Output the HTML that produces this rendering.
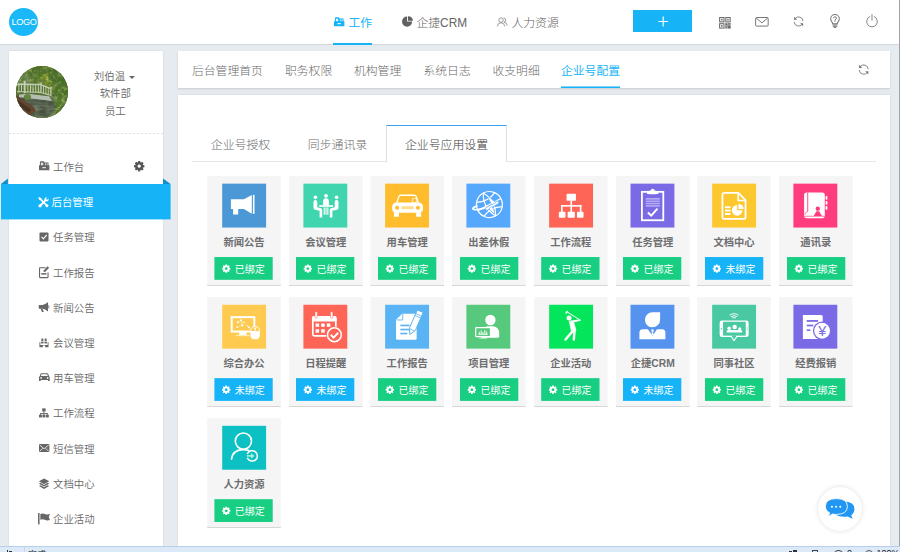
<!DOCTYPE html>
<html lang="zh-CN">
<head>
<meta charset="utf-8">
<title>企业号应用设置</title>
<style>
*{box-sizing:border-box;margin:0;padding:0}
html,body{width:900px;height:552px;overflow:hidden}
body{position:relative;background:#e6ebf0;font-family:"Liberation Sans","Noto Sans CJK SC",sans-serif;color:#666;font-size:10.4px;font-weight:350}
svg{display:block;overflow:visible}
#hd{position:absolute;left:0;top:0;width:899px;height:45px;background:#fff;border-bottom:1px solid #d3d8dd}
#rb{position:absolute;left:899px;top:0;width:1px;height:546px;background:#9fa3a7}
#logo{position:absolute;left:9px;top:8px;width:29px;height:28px;border-radius:50%;background:#1ab8f8;color:#fff;font-size:9.200px;line-height:28.500px;text-indent:2.600px;letter-spacing:-0.450px;overflow:hidden;white-space:nowrap}
.nav{position:absolute;top:0;height:45px;line-height:47px;font-size:11.850px;color:#646464;font-weight:300;white-space:nowrap}
.nav span{position:absolute;top:0}
.nav.on{color:#16b4f6;font-weight:400}
.nav.on:after{content:"";position:absolute;left:0;right:0;bottom:0;height:2px;background:#16b4f6}
.nav svg{position:absolute}
#plus{position:absolute;left:633px;top:10px;width:59px;height:22px;background:#16b4f6}
#plus{color:#fff;font-family:"Noto Sans CJK SC","Liberation Sans",sans-serif;font-weight:200;font-size:20.500px;line-height:21.400px;text-align:center;text-indent:0.800px}
.hi{position:absolute;color:#757575}
#sb{position:absolute;left:9px;top:51px;width:154px;height:495px;background:#fff;box-shadow:0 0 2px rgba(0,0,0,.10)}
#av{position:absolute;left:16px;top:65.500px;width:52px;height:52px;border-radius:50%;overflow:hidden;background:#5b6b2c}
.ut{position:absolute;left:67.300px;width:96px;text-align:center;font-size:10.400px;line-height:14px;color:#666;white-space:nowrap}
#dot{position:absolute;left:9px;top:133px;width:154px;height:1px;background:linear-gradient(90deg,#e0e0e0 50%,transparent 50%);background-size:4px 1px}
.mi{position:absolute;left:53px;font-size:10.400px;line-height:14px;color:#676767;white-space:nowrap}
.mc{position:absolute;color:#666}
#act{position:absolute;left:1px;top:184px;width:169px;height:35px;background:#16b4f6}
.fold{position:absolute;top:178px;width:0;height:0;border-style:solid}
#tb{position:absolute;left:178px;top:51px;width:712px;height:37px;background:#fff;box-shadow:0 0.500px 2px rgba(0,0,0,.13)}
.tab{position:absolute;top:51px;height:37px;line-height:40px;font-size:11.800px;color:#6a6a6a;font-weight:300;white-space:nowrap}
.tab.on{color:#16b4f6;font-weight:400}
.tab.on:after{content:"";position:absolute;left:0;right:0;bottom:0;height:2px;background:linear-gradient(to bottom,rgba(22,180,246,.55) 0,rgba(22,180,246,.55) 1px,#16b4f6 1px)}
#ct{position:absolute;left:178px;top:95px;width:712px;height:451px;background:#fff;box-shadow:0 0 2px rgba(0,0,0,.10)}
#tline{position:absolute;left:192px;top:161px;width:684px;height:1px;background:#e6e6e6}
.it{position:absolute;top:126px;height:35px;line-height:38.600px;font-size:11.900px;color:#6a6a6a;font-weight:300;text-align:center;white-space:nowrap}
.it.on{top:125px;height:37px;line-height:38.600px;background:#fff;border:1px solid #dfdfdf;border-top:1px solid #3d9ff0;border-bottom:0;color:#404040}
#cv{position:absolute;left:0;top:0}
.lb{position:absolute;width:93.600px;text-align:center;font-size:10.300px;line-height:14px;font-weight:bold;color:#6e6e6e;white-space:nowrap}
.bx{position:absolute;color:#fff;font-weight:400;font-size:10px;line-height:22.800px;white-space:nowrap}
#st{position:absolute;left:0;top:546px;width:900px;height:6px;background:#dce9f9;border-top:1px solid #b9cee9;overflow:hidden;font-size:9px;color:#1a1a1a}
#st span{position:absolute;top:0.400px;line-height:12px;white-space:nowrap}
#st i{position:absolute;top:2.600px;height:6px;background:#333;display:block}
#chat{position:absolute;left:818.400px;top:487.300px;width:44px;height:44px;border-radius:50%;background:#fff;box-shadow:0 0 5px rgba(0,0,0,.13)}
#chat svg{position:absolute;left:0;top:0}
</style>
</head>
<body>
<div id="hd"><div id="logo">LOGO</div>
<div class="nav on" style="left:333px;width:39px"><svg width="10.4" height="9.2" viewBox="0 0 10.400 9.200" style="left:0.700px;top:16.800px"><path d="M0 4.200 H10.400 V9.200 H0z M0.900 4.200 V1.300 Q0.900 0.200 2 0.200 H4.300 Q5 0.200 5.300 0.800 L5.600 1.400 H9.500 V4.200z" fill="currentColor"/><rect x="3.400" y="6.200" width="3.500" height="1" fill="#fff"/><rect x="1.900" y="1.700" width="2.300" height="2.500" fill="#fff" opacity="0.850"/><rect x="5.900" y="2.400" width="1.200" height="1.800" fill="#fff" opacity="0.700"/><rect x="7.700" y="2.400" width="1" height="1.800" fill="#fff" opacity="0.700"/></svg><span style="left:15.500px">工作</span></div>
<div class="nav" style="left:401px;width:66px"><svg width="11" height="11.2" viewBox="0 0 11.300 11" style="left:0.800px;top:16.400px;color:#606060"><path d="M5.200 0.300 A5.200 5.200 0 1 0 10.400 5.500 H5.200z" fill="currentColor"/><path d="M6 0 A5.200 5.200 0 0 1 11.200 4.700 H6z" fill="currentColor" transform="translate(0.100,0)"/></svg><span style="left:15.400px">企捷CRM</span></div>
<div class="nav" style="left:497px;width:63px"><svg width="10.6" height="10" viewBox="0 0 11 10" style="left:0.200px;top:16.600px;color:#808080"><g fill="none" stroke="currentColor" stroke-width="0.800"><circle cx="4.200" cy="3" r="2.300"/><path d="M0.400 9.600 Q0.600 5.800 4.200 5.800 Q7.800 5.800 8 9.600"/><path d="M6.800 0.800 Q9 1 9 3 Q9 5 7.200 5.200 Q10.400 5.400 10.600 8.800"/></g></svg><span style="left:14.400px">人力资源</span></div>
<div id="plus">+</div>
<div class="hi" style="left:719.1px;top:16.6px;color:#6a6a6a"><svg width="11.8" height="11.6" viewBox="0 0 12 12" ><g fill="none" stroke="currentColor" stroke-width="1.100"><rect x="0.550" y="0.550" width="4.500" height="4.500"/><rect x="6.950" y="0.550" width="4.500" height="4.500"/><rect x="0.550" y="6.950" width="4.500" height="4.500"/></g><g fill="currentColor"><rect x="2" y="2" width="1.600" height="1.600"/><rect x="8.400" y="2" width="1.600" height="1.600"/><rect x="2" y="8.400" width="1.600" height="1.600"/><rect x="6.400" y="6.400" width="2.400" height="2.600"/><rect x="9.200" y="6.400" width="2.800" height="1.600"/><rect x="6.400" y="9.400" width="1.600" height="2.600"/><rect x="8.600" y="8.600" width="3.400" height="3.400"/></g></svg></div>
<div class="hi" style="left:755px;top:17px"><svg width="13.8" height="9.6" viewBox="0 0 13.800 9.800" ><rect x="0.500" y="0.500" width="12.800" height="8.800" rx="1" fill="none" stroke="currentColor" stroke-width="1"/><path d="M1 1 L6.900 6 L12.800 1" fill="none" stroke="currentColor" stroke-width="1"/></svg></div>
<div class="hi" style="left:793.2px;top:15.6px"><svg width="11.2" height="11" viewBox="0 0 11.600 11.200" ><g transform="translate(11.600 0) scale(-1 1)"><g fill="none" stroke="currentColor" stroke-width="0.900"><path d="M1.200 5.200 A4.600 4.600 0 0 1 9.400 2.600"/><path d="M10.400 6 A4.600 4.600 0 0 1 2.200 8.600"/></g><path d="M10.500 0.700 V3.900 H7.300z" fill="currentColor"/><path d="M1.100 10.500 V7.300 H4.300z" fill="currentColor"/></g></svg></div>
<div class="hi" style="left:830.4px;top:13.8px"><svg width="10" height="14" viewBox="0 0 9.400 13.600" ><path d="M2.500 9.600 Q2.400 8.400 1.500 7.400 Q0.500 6.200 0.500 4.700 A4.200 4.200 0 0 1 8.900 4.700 Q8.900 6.200 7.900 7.400 Q7 8.400 6.900 9.600z" fill="none" stroke="currentColor" stroke-width="1"/><path d="M2.500 10.800 H6.900 M2.500 12 H6.900 M3.500 13.100 H5.900" stroke="currentColor" stroke-width="0.900"/><path d="M3.300 4 Q3.300 2.700 4.700 2.700 Q6.100 2.700 6.100 4 Q6.100 4.900 4.700 5.600 V7.400" fill="none" stroke="currentColor" stroke-width="0.900"/></svg></div>
<div class="hi" style="left:866.2px;top:13.9px;color:#858585"><svg width="12" height="12.4" viewBox="0 0 12 12.400" ><path d="M3.600 2.600 A5.400 5.400 0 1 0 8.400 2.600" fill="none" stroke="currentColor" stroke-width="1" stroke-linecap="round"/><path d="M6 0.500 V6.200" stroke="currentColor" stroke-width="1" stroke-linecap="round"/></svg></div>
</div><div id="rb"></div>
<div id="sb"></div>
<div id="av"><svg width="52" height="52" viewBox="0 0 52 52">
<defs><filter id="bl" x="-10%" y="-10%" width="120%" height="120%"><feGaussianBlur stdDeviation="1.1"/></filter>
<filter id="bl2" x="-10%" y="-10%" width="120%" height="120%"><feGaussianBlur stdDeviation="0.4"/></filter>
<filter id="bl3" x="-10%" y="-10%" width="120%" height="120%"><feGaussianBlur stdDeviation="0.6"/></filter>
<filter id="nz" x="0" y="0" width="100%" height="100%"><feTurbulence type="fractalNoise" baseFrequency="0.24" numOctaves="3" seed="7" result="n"/><feColorMatrix in="n" type="matrix" values="0 0 0 0 0.68  0 0 0 0 0.68  0 0 0 0 0.16  2.6 0 0 0 -1.2"/><feGaussianBlur stdDeviation="0.45"/></filter>
<filter id="nd" x="0" y="0" width="100%" height="100%"><feTurbulence type="fractalNoise" baseFrequency="0.3" numOctaves="2" seed="3" result="n"/><feColorMatrix in="n" type="matrix" values="0 0 0 0 0.10  0 0 0 0 0.18  0 0 0 0 0.05  0 2.8 0 0 -1.0"/><feGaussianBlur stdDeviation="0.45"/></filter>
<filter id="nw" x="0" y="0" width="100%" height="100%"><feTurbulence type="fractalNoise" baseFrequency="0.12 0.4" numOctaves="2" seed="11" result="n"/><feColorMatrix in="n" type="matrix" values="0 0 0 0 0.26  0 0 0 0 0.30  0 0 0 0 0.22  0 2.4 0 0 -0.95"/><feGaussianBlur stdDeviation="0.4"/></filter>
</defs>
<rect width="52" height="52" fill="#4b6c22"/>
<g filter="url(#bl)">
<ellipse cx="9" cy="13" rx="9" ry="7" fill="#6a8650"/>
<ellipse cx="22" cy="8" rx="10" ry="6" fill="#4a7020"/>
<ellipse cx="31" cy="14" rx="8" ry="6" fill="#7d9428"/>
<ellipse cx="41" cy="10" rx="9" ry="8" fill="#426a20"/>
<ellipse cx="36" cy="21" rx="7" ry="5" fill="#5d8026"/>
<ellipse cx="46" cy="25" rx="7" ry="12" fill="#456e22"/>
<ellipse cx="43" cy="38" rx="9" ry="8" fill="#50762a"/>
</g>
<rect width="52" height="52" filter="url(#nz)" opacity="0.650"/>
<rect width="52" height="52" filter="url(#nd)" opacity="0.850"/>
<g filter="url(#bl)">
<path d="M0 29 L8 28 L34 30.500 L37 35 L40 41 L36 48 L30 52 L0 52z" fill="#485240"/>
<path d="M16 35 L32 37 L35 44 L29 52 L19 52z" fill="#566250"/>
<path d="M22 40 L29 41 L30 50 L23 50z" fill="#464f3e"/>
</g>
<rect x="0" y="30" width="40" height="22" filter="url(#nw)" opacity="0.600"/>
<g filter="url(#bl3)">
<path d="M3 28.600 L12 27.800 L33 30.200 L36 35 L13 32.300 L3 31z" fill="#b4beb0"/>
<path d="M0 29 L18 41.500 L20 45 L12 50 L0 42z" fill="#62442e"/>
<path d="M0 33 L15 43.500 L13 46.500 L0 38.500z" fill="#463424"/>
<ellipse cx="11.500" cy="31" rx="3.600" ry="3" fill="#65833a"/>
</g>
<g filter="url(#bl2)" fill="#e9ece4" opacity="0.740">
<path d="M1 17.600 L24 17.800 L35 22 L35 23.300 L24 19.200 L1 19z"/>
<path d="M1 25 L24 25.800 L35 28.800 L35 30 L24 27 L1 26.200z" opacity="0.850"/>
<rect x="7.700" y="14.800" width="1.900" height="12.400"/>
<rect x="2.400" y="17.600" width="1" height="8.200"/><rect x="5" y="17.600" width="1" height="8.200"/>
<rect x="11.400" y="17.700" width="1" height="8.400"/><rect x="14" y="17.700" width="1" height="8.400"/><rect x="16.600" y="17.700" width="1" height="8.500"/><rect x="19.200" y="17.800" width="1" height="8.600"/><rect x="21.800" y="17.800" width="1" height="8.600"/>
<rect x="24.300" y="16.400" width="1.400" height="10.600"/>
<rect x="27" y="19.200" width="0.900" height="8.200"/><rect x="29.400" y="20" width="0.900" height="8.200"/><rect x="31.800" y="21" width="0.900" height="8.200"/>
<rect x="34.200" y="20.600" width="1.300" height="9.600"/>
</g>
</svg></div>
<div class="ut" style="top:70.200px;left:66.200px">刘伯温 <span style="display:inline-block;width:0;height:0;border:3.700px solid transparent;border-top:3.800px solid #666;border-bottom:0;vertical-align:1.200px;margin-left:0.600px"></span></div>
<div class="ut" style="top:87.200px">软件部</div>
<div class="ut" style="top:105.200px">员工</div>
<div id="dot"></div>
<svg style="position:absolute;left:0;top:170px" width="180" height="56" viewBox="0 170 180 56"><path d="M1 184 L7.900 178.600 V184z M163 178.600 L170.600 184 H163z" fill="#0f8ecd"/><rect x="1" y="184" width="169.600" height="35.400" fill="#16b4f6"/></svg>
<div class="mc" style="left:38.8px;top:160.8px"><svg width="10.4" height="9.2" viewBox="0 0 10.400 9.200" ><path d="M0 4.200 H10.400 V9.200 H0z M0.900 4.200 V1.300 Q0.900 0.200 2 0.200 H4.300 Q5 0.200 5.300 0.800 L5.600 1.400 H9.500 V4.200z" fill="currentColor"/><rect x="3.400" y="6.200" width="3.500" height="1" fill="#fff"/><rect x="1.900" y="1.700" width="2.300" height="2.500" fill="#fff" opacity="0.850"/><rect x="5.900" y="2.400" width="1.200" height="1.800" fill="#fff" opacity="0.700"/><rect x="7.700" y="2.400" width="1" height="1.800" fill="#fff" opacity="0.700"/></svg></div>
<div class="mi" style="top:161.00px">工作台</div>
<div class="mc" style="left:37.8px;top:196.6px;color:#fff"><svg width="11.2" height="10.6" viewBox="0 0 12 12" ><g transform="translate(12 0) scale(-1 1)"><g fill="none" stroke="currentColor" stroke-linecap="round"><path d="M2.600 2.600 L9.800 9.800" stroke-width="2.200"/><path d="M9.600 2.400 L2.400 9.600" stroke-width="1.900"/></g><circle cx="2.600" cy="2.600" r="2.400" fill="currentColor"/><path d="M0 0 L2.900 0.500 L2.900 2.900 L0.500 2.900z" fill="#16b4f6"/><path d="M8.200 1.300 L11.200 0 L12 0.800 L10.700 3.800z" fill="currentColor"/><circle cx="10" cy="10" r="1.900" fill="currentColor"/><circle cx="2.200" cy="9.800" r="1.700" fill="currentColor"/></g></svg></div>
<div class="mi" style="top:196.20px;color:#fff;left:51.600px;font-weight:400">后台管理</div>
<div class="mc" style="left:39.4px;top:231.6px"><svg width="10" height="10" viewBox="0 0 10.300 10.300" ><rect x="0.500" y="0.500" width="9.300" height="9.300" rx="1" fill="currentColor"/><path d="M2.600 5 L4.500 7 L8 3" fill="none" stroke="#fff" stroke-width="1.200"/></svg></div>
<div class="mi" style="top:231.40px">任务管理</div>
<div class="mc" style="left:38.9px;top:266px"><svg width="10.2" height="12.2" viewBox="0 0 10.200 12.200" ><path d="M6.600 1.700 H1.100 Q0.550 1.700 0.550 2.250 V11.100 Q0.550 11.650 1.100 11.650 H8.500 Q9.050 11.650 9.050 11.100 V6.400" fill="none" stroke="currentColor" stroke-width="1.100"/><path d="M8.600 0.200 L10.100 1.700 L6.400 5.700 L4.500 6.100 L4.900 4.200z" fill="currentColor"/><rect x="2.200" y="7.100" width="5.200" height="1.500" fill="currentColor"/></svg></div>
<div class="mi" style="top:266.60px">工作报告</div>
<div class="mc" style="left:38px;top:302.4px"><svg width="11.6" height="10.6" viewBox="0 0 11.600 11" ><path d="M0.500 4 Q0.500 3 1.500 3 H4.500 Q7.500 2.500 9.500 0.500 H10.200 V9.500 H9.500 Q7.500 7.500 4.500 7 H1.500 Q0.500 7 0.500 6z" fill="currentColor"/><path d="M2.500 7 H4.500 L5.800 10.500 H3.800z" fill="currentColor"/><path d="M10.700 3.500 Q11.800 5 10.700 6.500" stroke="currentColor" stroke-width="0.900" fill="none"/></svg></div>
<div class="mi" style="top:301.80px">新闻公告</div>
<div class="mc" style="left:39.2px;top:337.6px"><svg width="9.6" height="9.6" viewBox="0 0 11 11" ><g fill="currentColor"><rect x="2.700" y="0.500" width="2.300" height="3" rx="0.400"/><rect x="6.500" y="0.500" width="2.300" height="3" rx="0.400"/><rect x="2.200" y="4.200" width="3" height="2" /><rect x="6.200" y="4.200" width="3" height="2"/><path d="M0.500 5 h1 v3 h8.400 v-3 h1 v5.500 h-3.900 v-1.800 h-2.600 v1.800 h-3.900z"/></g></svg></div>
<div class="mi" style="top:337.00px">会议管理</div>
<div class="mc" style="left:38.9px;top:372.2px"><svg width="10.7" height="9.8" viewBox="0 0 11.400 10" ><path d="M2.600 1 H8.800 Q9.600 1 9.900 1.900 L10.700 4.200 Q11.400 4.500 11.400 5.400 V9.300 H9.600 V8.200 H1.800 V9.300 H0 V5.400 Q0 4.500 0.700 4.200 L1.500 1.900 Q1.800 1 2.600 1z M2.600 2.100 L2 4 H9.400 L8.800 2.100z" fill="currentColor" fill-rule="evenodd"/><circle cx="2.200" cy="6.100" r="0.900" fill="#fff"/><circle cx="9.200" cy="6.100" r="0.900" fill="#fff"/></svg></div>
<div class="mi" style="top:372.20px">用车管理</div>
<div class="mc" style="left:39.2px;top:407.9px"><svg width="9.8" height="9.8" viewBox="0 0 10.800 10" ><g fill="currentColor"><rect x="3.500" y="0" width="3.800" height="3.400"/><rect x="4.900" y="3" width="1" height="4.200"/><rect x="1.300" y="5.200" width="8.200" height="1"/><rect x="1.300" y="5.200" width="1" height="2"/><rect x="8.500" y="5.200" width="1" height="2"/><rect x="0" y="7" width="3.200" height="3"/><rect x="3.800" y="7" width="3.200" height="3"/><rect x="7.600" y="7" width="3.200" height="3"/></g></svg></div>
<div class="mi" style="top:407.40px">工作流程</div>
<div class="mc" style="left:39px;top:444.2px"><svg width="10.4" height="8" viewBox="0 0 10.500 8" ><rect x="0" y="0" width="10.500" height="8" rx="0.600" fill="currentColor"/><path d="M0.600 0.900 L5.250 4.800 L9.900 0.900 M0.600 7.400 L3.800 4.200 M9.900 7.400 L6.700 4.200" stroke="#fff" stroke-width="0.800" fill="none"/></svg></div>
<div class="mi" style="top:442.60px">短信管理</div>
<div class="mc" style="left:38.9px;top:477.8px"><svg width="10.2" height="11.4" viewBox="0 0 11 11.800" ><g fill="currentColor"><path d="M5.500 0.200 L11 3.300 L5.500 6.400 L0 3.300z"/><path d="M0 5.900 L1.600 5 L5.500 7.200 L9.400 5 L11 5.900 L5.500 9z"/><path d="M0 8.500 L1.600 7.600 L5.500 9.800 L9.400 7.600 L11 8.500 L5.500 11.600z"/></g></svg></div>
<div class="mi" style="top:477.80px">文档中心</div>
<div class="mc" style="left:38.2px;top:513.2px"><svg width="12" height="11.4" viewBox="0 0 12 11.500" ><rect x="0" y="0" width="1.500" height="11.500" fill="currentColor"/><path d="M2.300 0.900 Q4.700 0 6.800 1 Q9.300 2.100 12 1.100 L10.800 4 L12 7 Q9.300 8 6.800 6.900 Q4.700 5.900 2.300 6.800z" fill="currentColor"/></svg></div>
<div class="mi" style="top:513.00px">企业活动</div>
<div class="mc" style="left:133.8px;top:160.9px;color:#555"><svg width="10.4" height="10.4" viewBox="0 0 12 12" ><path fill="currentColor" fill-rule="evenodd" d="M4.900 0 h2.200 l0.300 1.500 l0.800 0.350 l1.300-0.900 l1.550 1.550 l-0.900 1.300 l0.350 0.800 l1.500 0.300 v2.200 l-1.500 0.300 l-0.350 0.800 l0.900 1.300 l-1.550 1.550 l-1.300-0.900 l-0.800 0.350 l-0.300 1.500 h-2.200 l-0.300-1.500 l-0.800-0.350 l-1.300 0.900 l-1.550-1.550 l0.900-1.300 l-0.350-0.800 l-1.500-0.300 v-2.200 l1.500-0.300 l0.350-0.800 l-0.900-1.300 l1.550-1.550 l1.300 0.900 l0.800-0.350z M6 4.100 a1.900 1.900 0 1 0 0.001 0z"/></svg></div>
<div id="tb"></div>
<div class="tab" style="left:192px">后台管理首页</div>
<div class="tab" style="left:285px">职务权限</div>
<div class="tab" style="left:354px">机构管理</div>
<div class="tab" style="left:423.5px">系统日志</div>
<div class="tab" style="left:492.5px">收支明细</div>
<div class="tab on" style="left:561px">企业号配置</div>
<div class="hi" style="left:858.4px;top:63.6px;color:#777"><svg width="11.4" height="11.2" viewBox="0 0 11.600 11.200" ><g transform="translate(11.600 0) scale(-1 1)"><g fill="none" stroke="currentColor" stroke-width="0.900"><path d="M1.200 5.200 A4.600 4.600 0 0 1 9.400 2.600"/><path d="M10.400 6 A4.600 4.600 0 0 1 2.200 8.600"/></g><path d="M10.500 0.700 V3.900 H7.300z" fill="currentColor"/><path d="M1.100 10.500 V7.300 H4.300z" fill="currentColor"/></g></svg></div>
<div id="ct"></div><div id="tline"></div>
<div class="it" style="left:192px;width:97px">企业号授权</div>
<div class="it" style="left:289px;width:97px">同步通讯录</div>
<div class="it on" style="left:386px;width:121px">企业号应用设置</div>
<svg id="cv" width="900" height="552" viewBox="0 0 900 552"><rect x="207.20" y="176.00" width="73.6" height="109.50" fill="#f5f5f6"/><rect x="207.20" y="285" width="73.6" height="1" fill="#d7d7d7"/><g transform="translate(222.20 183.65)"><rect width="43.900" height="43.900" fill="#4c97d5"/><path d="M8.700 15.500 H21.700 L29.600 11.400 V30 L21.700 25.300 H16 V30.800 H10.900 V25.300 H8.700z" fill="#fff"/>
<rect x="30.700" y="11.200" width="1.600" height="19" fill="#fff"/></g><rect x="214.40" y="257.05" width="58.300" height="22.750" fill="#17ce82"/><g transform="translate(222.10 264.50) scale(0.690)"><path fill="#fff" fill-rule="evenodd" d="M4.900 0 h2.200 l0.300 1.500 l0.800 0.350 l1.300-0.900 l1.550 1.550 l-0.900 1.300 l0.350 0.800 l1.500 0.300 v2.200 l-1.500 0.300 l-0.350 0.800 l0.900 1.300 l-1.550 1.550 l-1.300-0.900 l-0.800 0.350 l-0.300 1.500 h-2.200 l-0.300-1.500 l-0.800-0.350 l-1.300 0.900 l-1.550-1.550 l0.900-1.300 l-0.350-0.800 l-1.500-0.300 v-2.200 l1.500-0.300 l0.350-0.800 l-0.900-1.300 l1.550-1.550 l1.300 0.900 l0.800-0.350z M6 4 a2 2 0 1 0 0.001 0z"/></g><rect x="289.00" y="176.00" width="73.6" height="109.50" fill="#f5f5f6"/><rect x="289.00" y="285" width="73.6" height="1" fill="#d7d7d7"/><g transform="translate(303.40 183.65)"><rect width="43.900" height="43.900" fill="#40d5ae"/><g fill="#fff">
<circle cx="12" cy="13.700" r="1.800"/><circle cx="22.600" cy="12.200" r="1.900"/><circle cx="33.200" cy="13.700" r="1.800"/>
<path d="M19.700 21.800 v-4.400 a2.900 2.900 0 0 1 5.800 0 V21.800z"/>
<rect x="15.800" y="21.500" width="13.800" height="1.700"/>
<rect x="20.300" y="23.800" width="1.100" height="7.300"/><rect x="22.100" y="23.800" width="1.100" height="7.300"/><rect x="23.900" y="23.800" width="1.100" height="7.300"/>
<path d="M10.100 18.300 a1.900 1.900 0 0 1 3.800 0 v5.400 l3.600 0.900 q1.300 0.400 1.300 1.700 v7.500 h-2.600 v-6.600 l-4.600-1 q-1.500-0.400 -1.500-2z"/>
<path d="M35.100 18.300 a1.900 1.900 0 0 0 -3.800 0 v5.400 l-3.600 0.900 q-1.300 0.400 -1.300 1.700 v7.500 h2.600 v-6.600 l4.600-1 q1.500-0.400 1.500-2z"/>
</g></g><rect x="296.00" y="257.05" width="58.300" height="22.750" fill="#17ce82"/><g transform="translate(303.70 264.50) scale(0.690)"><path fill="#fff" fill-rule="evenodd" d="M4.900 0 h2.200 l0.300 1.500 l0.800 0.350 l1.300-0.900 l1.550 1.550 l-0.900 1.300 l0.350 0.800 l1.500 0.300 v2.200 l-1.500 0.300 l-0.350 0.800 l0.900 1.300 l-1.550 1.550 l-1.300-0.900 l-0.800 0.350 l-0.300 1.500 h-2.200 l-0.300-1.500 l-0.800-0.350 l-1.300 0.900 l-1.550-1.550 l0.900-1.300 l-0.350-0.800 l-1.500-0.300 v-2.200 l1.500-0.300 l0.350-0.800 l-0.900-1.300 l1.550-1.550 l1.300 0.900 l0.800-0.350z M6 4 a2 2 0 1 0 0.001 0z"/></g><rect x="370.40" y="176.00" width="73.6" height="109.50" fill="#f5f5f6"/><rect x="370.40" y="285" width="73.6" height="1" fill="#d7d7d7"/><g transform="translate(385.15 183.65)"><rect width="43.900" height="43.900" fill="#ffbc2c"/><path d="M11.6 19.2 L13.6 13.2 Q14.2 11.6 16 11.6 H28.8 Q30.6 11.6 31.2 13.2 L33.2 19.2" fill="none" stroke="#fff" stroke-width="1.3"/>
<circle cx="29.3" cy="16.8" r="2.3" fill="none" stroke="#fff" stroke-width="0.8"/>
<path d="M10.5 18.8 H34.3 Q37.9 19.6 37.9 24 Q37.9 28.2 34.5 29.2 H10.3 Q6.9 28.2 6.9 24 Q6.9 19.6 10.5 18.8z" fill="#fff"/>
<rect x="8.8" y="28.5" width="5" height="4.7" rx="0.6" fill="#fff"/><rect x="31" y="28.5" width="5" height="4.7" rx="0.6" fill="#fff"/>
<circle cx="12" cy="24" r="2" fill="#ffbc2c"/><circle cx="32.8" cy="24" r="2" fill="#ffbc2c"/>
<rect x="16.4" y="22.6" width="12" height="2.9" fill="#ffdb8a"/></g><rect x="378.00" y="257.05" width="58.300" height="22.750" fill="#17ce82"/><g transform="translate(385.70 264.50) scale(0.690)"><path fill="#fff" fill-rule="evenodd" d="M4.900 0 h2.200 l0.300 1.500 l0.800 0.350 l1.300-0.900 l1.550 1.550 l-0.900 1.300 l0.350 0.800 l1.500 0.300 v2.200 l-1.500 0.300 l-0.350 0.800 l0.900 1.300 l-1.550 1.550 l-1.300-0.900 l-0.800 0.350 l-0.300 1.500 h-2.200 l-0.300-1.500 l-0.800-0.350 l-1.300 0.900 l-1.550-1.550 l0.900-1.300 l-0.350-0.800 l-1.500-0.300 v-2.200 l1.500-0.300 l0.350-0.800 l-0.900-1.300 l1.550-1.550 l1.300 0.900 l0.800-0.350z M6 4 a2 2 0 1 0 0.001 0z"/></g><rect x="452.00" y="176.00" width="73.6" height="109.50" fill="#f5f5f6"/><rect x="452.00" y="285" width="73.6" height="1" fill="#d7d7d7"/><g transform="translate(466.40 183.65)"><rect width="43.900" height="43.900" fill="#56a8fc"/><g fill="none" stroke="#fff" stroke-width="1.200" transform="rotate(-28 23 20.900)">
<circle cx="23" cy="20.900" r="13"/>
<path d="M23 7.900 Q15.500 20.900 23 33.900"/>
<path d="M23 7.900 Q30.500 20.900 23 33.900"/>
<path d="M12.600 13 Q23 18 33.400 13"/>
<path d="M12.600 28.800 Q23 23.800 33.400 28.800"/>
<path d="M10 20.900 H36"/>
</g>
<path d="M20.500 23.600 Q8 27.500 6.600 25.300 Q6.200 23.600 10.500 22.400" fill="none" stroke="#fff" stroke-width="1.900" stroke-linecap="round"/>
<path d="M18.800 24.600 L29.800 17.800 Q31.800 16.800 32.500 18 Q32.800 19.300 31 20.500 L20.200 27z" fill="#fff" stroke="#56a8fc" stroke-width="0.700"/>
<path d="M25.600 21.200 L21.600 14.600 L23.600 13.800 L29.200 19.200z" fill="#fff" stroke="#56a8fc" stroke-width="0.500"/>
<path d="M25.600 22.800 L28.600 28.800 L26.800 29.600 L22.600 24.800z" fill="#fff" stroke="#56a8fc" stroke-width="0.500"/></g><rect x="460.00" y="257.05" width="58.300" height="22.750" fill="#17ce82"/><g transform="translate(467.70 264.50) scale(0.690)"><path fill="#fff" fill-rule="evenodd" d="M4.900 0 h2.200 l0.300 1.500 l0.800 0.350 l1.300-0.900 l1.550 1.550 l-0.900 1.300 l0.350 0.800 l1.500 0.300 v2.200 l-1.500 0.300 l-0.350 0.800 l0.900 1.300 l-1.550 1.550 l-1.300-0.900 l-0.800 0.350 l-0.300 1.500 h-2.200 l-0.300-1.500 l-0.800-0.350 l-1.300 0.900 l-1.550-1.550 l0.900-1.300 l-0.350-0.800 l-1.500-0.300 v-2.200 l1.500-0.300 l0.350-0.800 l-0.900-1.300 l1.550-1.550 l1.300 0.900 l0.800-0.350z M6 4 a2 2 0 1 0 0.001 0z"/></g><rect x="534.00" y="176.00" width="73.6" height="109.50" fill="#f5f5f6"/><rect x="534.00" y="285" width="73.6" height="1" fill="#d7d7d7"/><g transform="translate(549.15 183.65)"><rect width="43.900" height="43.900" fill="#ff6557"/><g fill="#fff">
<rect x="17.400" y="10.200" width="9.400" height="7" rx="0.900"/>
<rect x="21.300" y="17" width="1.600" height="11.600"/>
<rect x="11.900" y="21.400" width="20.400" height="1.600"/>
<rect x="11.900" y="21.400" width="1.600" height="7.200"/><rect x="30.700" y="21.400" width="1.600" height="7.200"/>
<rect x="9.700" y="28.200" width="6.600" height="6" rx="0.800"/><rect x="18.500" y="28.200" width="7.200" height="6" rx="0.800"/><rect x="27.800" y="28.200" width="6.600" height="6" rx="0.800"/>
</g></g><rect x="541.20" y="257.05" width="58.300" height="22.750" fill="#17ce82"/><g transform="translate(548.90 264.50) scale(0.690)"><path fill="#fff" fill-rule="evenodd" d="M4.900 0 h2.200 l0.300 1.500 l0.800 0.350 l1.300-0.900 l1.550 1.550 l-0.900 1.300 l0.350 0.800 l1.500 0.300 v2.200 l-1.500 0.300 l-0.350 0.800 l0.900 1.300 l-1.550 1.550 l-1.300-0.900 l-0.800 0.350 l-0.300 1.500 h-2.200 l-0.300-1.500 l-0.800-0.350 l-1.300 0.900 l-1.550-1.550 l0.900-1.300 l-0.350-0.800 l-1.500-0.300 v-2.200 l1.500-0.300 l0.350-0.800 l-0.900-1.300 l1.550-1.550 l1.300 0.900 l0.800-0.350z M6 4 a2 2 0 1 0 0.001 0z"/></g><rect x="616.00" y="176.00" width="73.6" height="109.50" fill="#f5f5f6"/><rect x="616.00" y="285" width="73.6" height="1" fill="#d7d7d7"/><g transform="translate(630.50 183.65)"><rect width="43.900" height="43.900" fill="#7b6ae6"/><rect x="11.400" y="8.200" width="21.400" height="28.400" fill="none" stroke="#fff" stroke-width="1.800"/>
<path d="M16.400 10 Q16.400 7.200 19 7 L20.200 6.900 Q20.600 5 22.200 5 Q23.800 5 24.200 6.900 L25.400 7 Q28 7.200 28 10 Q22.200 11.200 16.400 10z" fill="#fff"/>
<g fill="#b9b0f3"><rect x="15.300" y="14.400" width="14" height="1.600"/><rect x="15.300" y="16.900" width="14" height="1.400"/><rect x="15.300" y="19.200" width="14" height="1.400"/><rect x="15.300" y="21.500" width="14" height="1.500"/></g>
<path d="M17.400 28.800 L20.700 32 L27 25" fill="none" stroke="#fff" stroke-width="2"/></g><rect x="623.00" y="257.05" width="58.300" height="22.750" fill="#17ce82"/><g transform="translate(630.70 264.50) scale(0.690)"><path fill="#fff" fill-rule="evenodd" d="M4.900 0 h2.200 l0.300 1.500 l0.800 0.350 l1.300-0.900 l1.550 1.550 l-0.900 1.300 l0.350 0.800 l1.500 0.300 v2.200 l-1.500 0.300 l-0.350 0.800 l0.900 1.300 l-1.550 1.550 l-1.300-0.900 l-0.800 0.350 l-0.300 1.500 h-2.200 l-0.300-1.500 l-0.800-0.350 l-1.300 0.900 l-1.550-1.550 l0.900-1.300 l-0.350-0.800 l-1.500-0.300 v-2.200 l1.500-0.300 l0.350-0.800 l-0.900-1.300 l1.550-1.550 l1.300 0.900 l0.800-0.350z M6 4 a2 2 0 1 0 0.001 0z"/></g><rect x="697.20" y="176.00" width="73.6" height="109.50" fill="#f5f5f6"/><rect x="697.20" y="285" width="73.6" height="1" fill="#d7d7d7"/><g transform="translate(712.15 183.65)"><rect width="43.900" height="43.900" fill="#fdc72e"/><path d="M11.800 9.200 H26.200 L33.400 16.400 V33.600 Q33.400 35.200 31.800 35.200 H11.800 Q10.300 35.200 10.300 33.600 V10.800 Q10.300 9.200 11.800 9.200z" fill="none" stroke="#fff" stroke-width="1.800" stroke-linejoin="round"/>
<path d="M26 9.600 V16.800 H33" fill="none" stroke="#fff" stroke-width="1.600"/>
<g fill="#fff"><rect x="12.800" y="22.600" width="5.600" height="1.900"/><rect x="12.800" y="26" width="5.600" height="1.900"/><rect x="12.800" y="29.400" width="5.600" height="1.900"/>
<path d="M25 21.400 A5.300 5.300 0 1 0 30.300 26.700 H25z"/>
<path d="M26.300 20 A5.300 5.300 0 0 1 31.600 25.300 H26.300z"/></g></g><rect x="705.00" y="257.05" width="58.300" height="22.750" fill="#16b4f6"/><g transform="translate(712.70 264.50) scale(0.690)"><path fill="#fff" fill-rule="evenodd" d="M4.900 0 h2.200 l0.300 1.500 l0.800 0.350 l1.300-0.900 l1.550 1.550 l-0.900 1.300 l0.350 0.800 l1.500 0.300 v2.200 l-1.500 0.300 l-0.350 0.800 l0.900 1.300 l-1.550 1.550 l-1.300-0.900 l-0.800 0.350 l-0.300 1.500 h-2.200 l-0.300-1.500 l-0.800-0.350 l-1.300 0.900 l-1.550-1.550 l0.900-1.300 l-0.350-0.800 l-1.500-0.300 v-2.200 l1.500-0.300 l0.350-0.800 l-0.900-1.300 l1.550-1.550 l1.300 0.900 l0.800-0.350z M6 4 a2 2 0 1 0 0.001 0z"/></g><rect x="779.00" y="176.00" width="73.6" height="109.50" fill="#f5f5f6"/><rect x="779.00" y="285" width="73.6" height="1" fill="#d7d7d7"/><g transform="translate(793.40 183.65)"><rect width="43.900" height="43.900" fill="#ff3c7e"/><rect x="10.700" y="8.800" width="20.700" height="25.700" rx="2.600" fill="#fff"/>
<rect x="13.900" y="8.800" width="0.900" height="19" fill="#ff3c7e"/>
<path d="M11 32.600 H31.400" stroke="#ff3c7e" stroke-width="0.700"/>
<path d="M14.400 27.800 Q12 28.200 11.500 31" stroke="#ff3c7e" stroke-width="0.700" fill="none"/>
<g fill="#fff"><rect x="32.200" y="12.300" width="1.800" height="3.700" rx="0.700"/><rect x="32.200" y="17.300" width="1.800" height="3.700" rx="0.700"/><rect x="32.200" y="22.300" width="1.800" height="3.700" rx="0.700"/></g>
<circle cx="24.400" cy="25" r="2.200" fill="#ff3c7e"/>
<path d="M20.300 32.300 L23 27.500 H25.800 L28.500 32.300z" fill="#ff3c7e"/></g><rect x="787.00" y="257.05" width="58.300" height="22.750" fill="#17ce82"/><g transform="translate(794.70 264.50) scale(0.690)"><path fill="#fff" fill-rule="evenodd" d="M4.900 0 h2.200 l0.300 1.500 l0.800 0.350 l1.300-0.900 l1.550 1.550 l-0.900 1.300 l0.350 0.800 l1.500 0.300 v2.200 l-1.500 0.300 l-0.350 0.800 l0.900 1.300 l-1.550 1.550 l-1.300-0.900 l-0.800 0.350 l-0.300 1.500 h-2.200 l-0.300-1.500 l-0.800-0.350 l-1.300 0.900 l-1.550-1.550 l0.900-1.300 l-0.350-0.800 l-1.500-0.300 v-2.200 l1.500-0.300 l0.350-0.800 l-0.900-1.300 l1.550-1.550 l1.300 0.900 l0.800-0.350z M6 4 a2 2 0 1 0 0.001 0z"/></g><rect x="207.20" y="297.10" width="73.6" height="109.40" fill="#f5f5f6"/><rect x="207.20" y="406" width="73.6" height="1" fill="#d7d7d7"/><g transform="translate(222.20 304.75)"><rect width="43.900" height="43.900" fill="#ffca50"/><rect x="9.500" y="12.400" width="22.600" height="14.400" fill="none" stroke="#fff" stroke-width="2"/>
<rect x="17" y="27.400" width="7.400" height="3.400" fill="#fff"/>
<rect x="13.600" y="30.200" width="13.800" height="1.200" fill="#ffeab8"/>
<g stroke="#ffeab8" stroke-width="0.800" fill="none"><path d="M15.600 17.600 L18.600 15.600 L20.200 20.400 L14.800 22.600 M18.600 15.600 L22 18"/></g>
<g fill="#fff"><circle cx="18.600" cy="15.600" r="1"/><circle cx="15.600" cy="17.600" r="1.100"/><circle cx="20.200" cy="20.600" r="1.100"/><circle cx="14.800" cy="22.400" r="0.800"/><circle cx="22" cy="17.800" r="0.700"/></g>
<path d="M23.800 19.800 L27 24 L28 22.400z" fill="#fff"/>
<path d="M28.600 27 V25.800 Q28.600 21.800 33 21.800 Q37.200 21.800 37.200 25.800 V27z" fill="#ffca50" stroke="#fff" stroke-width="0.900"/>
<path d="M28.200 26.600 H37.600 V30.400 Q37.600 34.600 33 34.600 Q28.200 34.600 28.200 30.400z" fill="#fff"/>
<rect x="32.300" y="22.800" width="1.400" height="3" rx="0.600" fill="#fff"/></g><rect x="214.40" y="378.15" width="58.300" height="22.750" fill="#16b4f6"/><g transform="translate(222.10 385.60) scale(0.690)"><path fill="#fff" fill-rule="evenodd" d="M4.900 0 h2.200 l0.300 1.500 l0.800 0.350 l1.300-0.900 l1.550 1.550 l-0.900 1.300 l0.350 0.800 l1.500 0.300 v2.200 l-1.500 0.300 l-0.350 0.800 l0.900 1.300 l-1.550 1.550 l-1.300-0.900 l-0.800 0.350 l-0.300 1.500 h-2.200 l-0.300-1.500 l-0.800-0.350 l-1.300 0.900 l-1.550-1.550 l0.900-1.300 l-0.350-0.800 l-1.500-0.300 v-2.200 l1.500-0.300 l0.350-0.800 l-0.900-1.300 l1.550-1.550 l1.300 0.900 l0.800-0.350z M6 4 a2 2 0 1 0 0.001 0z"/></g><rect x="289.00" y="297.10" width="73.6" height="109.40" fill="#f5f5f6"/><rect x="289.00" y="406" width="73.6" height="1" fill="#d7d7d7"/><g transform="translate(303.40 304.75)"><rect width="43.900" height="43.900" fill="#ff6557"/><path d="M8.600 13.400 Q8.600 11.200 10.800 11.200 H31 Q33.200 11.200 33.200 13.400 V16.800 H8.600z" fill="#fff"/>
<rect x="9.400" y="12" width="23" height="19.200" rx="1.600" fill="none" stroke="#fff" stroke-width="1.700"/>
<rect x="11.600" y="6.900" width="2.300" height="6.600" rx="1.100" fill="#fff" stroke="#ff6557" stroke-width="0.500"/>
<rect x="27.100" y="6.900" width="2.300" height="6.600" rx="1.100" fill="#fff" stroke="#ff6557" stroke-width="0.500"/>
<g fill="#fff"><rect x="12.200" y="18.700" width="3.500" height="3.400"/><rect x="17.800" y="18.700" width="3.500" height="3.400"/><rect x="23.400" y="18.700" width="3.500" height="3.400"/>
<rect x="12.200" y="24.500" width="3.500" height="3.400"/><rect x="17.800" y="24.500" width="3.500" height="3.400"/></g>
<circle cx="31" cy="30" r="8.300" fill="#ff6557"/>
<circle cx="31" cy="30" r="6.900" fill="none" stroke="#fff" stroke-width="1.500"/>
<path d="M27.400 30 L30.200 32.800 L34.800 28" fill="none" stroke="#fff" stroke-width="1.900"/></g><rect x="296.00" y="378.15" width="58.300" height="22.750" fill="#16b4f6"/><g transform="translate(303.70 385.60) scale(0.690)"><path fill="#fff" fill-rule="evenodd" d="M4.900 0 h2.200 l0.300 1.500 l0.800 0.350 l1.300-0.900 l1.550 1.550 l-0.900 1.300 l0.350 0.800 l1.500 0.300 v2.200 l-1.500 0.300 l-0.350 0.800 l0.900 1.300 l-1.550 1.550 l-1.300-0.900 l-0.800 0.350 l-0.300 1.500 h-2.200 l-0.300-1.500 l-0.800-0.350 l-1.300 0.900 l-1.550-1.550 l0.900-1.300 l-0.350-0.800 l-1.500-0.300 v-2.200 l1.500-0.300 l0.350-0.800 l-0.900-1.300 l1.550-1.550 l1.300 0.900 l0.800-0.350z M6 4 a2 2 0 1 0 0.001 0z"/></g><rect x="370.40" y="297.10" width="73.6" height="109.40" fill="#f5f5f6"/><rect x="370.40" y="406" width="73.6" height="1" fill="#d7d7d7"/><g transform="translate(385.15 304.75)"><rect width="43.900" height="43.900" fill="#5ab4f4"/><path d="M17 9 H30 Q31.500 9 31.500 10.500 V33.600 Q31.500 35.100 30 35.100 H12.400 Q10.900 35.100 10.900 33.600 V15z" fill="#fff"/>
<path d="M11.600 15.200 H17.600 V9.400" fill="none" stroke="#5ab4f4" stroke-width="0.900"/>
<g fill="#5ab4f4"><rect x="15.200" y="19.900" width="9.200" height="1.600"/><rect x="15.200" y="24" width="9.200" height="1.600"/><rect x="15.200" y="28" width="7" height="1.600"/></g>
<path d="M32.200 5.200 L38 7.700 L30.300 25.600 L24.700 29.800 L24.400 23z" fill="#fff" stroke="#5ab4f4" stroke-width="1" stroke-linejoin="round"/>
<path d="M30.600 8.900 L36.400 11.400 M29.800 10.800 L35.600 13.300" stroke="#5ab4f4" stroke-width="0.800"/>
<path d="M24.800 24.200 L29.400 26.200" stroke="#5ab4f4" stroke-width="0.700"/></g><rect x="378.00" y="378.15" width="58.300" height="22.750" fill="#17ce82"/><g transform="translate(385.70 385.60) scale(0.690)"><path fill="#fff" fill-rule="evenodd" d="M4.900 0 h2.200 l0.300 1.500 l0.800 0.350 l1.300-0.900 l1.550 1.550 l-0.900 1.300 l0.350 0.800 l1.500 0.300 v2.200 l-1.500 0.300 l-0.350 0.800 l0.900 1.300 l-1.550 1.550 l-1.300-0.900 l-0.800 0.350 l-0.300 1.500 h-2.200 l-0.300-1.500 l-0.800-0.350 l-1.300 0.900 l-1.550-1.550 l0.900-1.300 l-0.350-0.800 l-1.500-0.300 v-2.200 l1.500-0.300 l0.350-0.800 l-0.900-1.300 l1.550-1.550 l1.300 0.900 l0.800-0.350z M6 4 a2 2 0 1 0 0.001 0z"/></g><rect x="452.00" y="297.10" width="73.6" height="109.40" fill="#f5f5f6"/><rect x="452.00" y="406" width="73.6" height="1" fill="#d7d7d7"/><g transform="translate(466.40 304.75)"><rect width="43.900" height="43.900" fill="#57c97d"/><circle cx="24" cy="15.300" r="5.200" fill="#fff"/>
<path d="M17 33 V27 Q17 21.600 22.400 21.600 H26 Q32.800 21.600 32.800 29.200 V31.400 Q32.800 33 30.800 33z" fill="#fff"/>
<rect x="9.300" y="22.900" width="14.800" height="8.900" rx="0.800" fill="#57c97d" stroke="#fff" stroke-width="1.200"/>
<g fill="#d9f3e2"><rect x="12.400" y="27" width="1.200" height="3.200"/><rect x="14.200" y="25.800" width="1.200" height="4.400"/><rect x="16" y="27.200" width="1.200" height="3"/><rect x="17.800" y="25.400" width="1.200" height="4.800"/><rect x="19.600" y="26.600" width="1.200" height="3.600"/><rect x="12" y="29" width="9.400" height="1.300"/></g>
<rect x="14.600" y="32.200" width="4.400" height="0.900" fill="#fff"/><rect x="12.800" y="33.100" width="8" height="0.700" fill="#e6f7ec"/></g><rect x="460.00" y="378.15" width="58.300" height="22.750" fill="#17ce82"/><g transform="translate(467.70 385.60) scale(0.690)"><path fill="#fff" fill-rule="evenodd" d="M4.900 0 h2.200 l0.300 1.500 l0.800 0.350 l1.300-0.900 l1.550 1.550 l-0.900 1.300 l0.350 0.800 l1.500 0.300 v2.200 l-1.500 0.300 l-0.350 0.800 l0.900 1.300 l-1.550 1.550 l-1.300-0.900 l-0.800 0.350 l-0.300 1.500 h-2.200 l-0.300-1.500 l-0.800-0.350 l-1.300 0.900 l-1.550-1.550 l0.900-1.300 l-0.350-0.800 l-1.500-0.300 v-2.200 l1.500-0.300 l0.350-0.800 l-0.900-1.300 l1.550-1.550 l1.300 0.900 l0.800-0.350z M6 4 a2 2 0 1 0 0.001 0z"/></g><rect x="534.00" y="297.10" width="73.6" height="109.40" fill="#f5f5f6"/><rect x="534.00" y="406" width="73.6" height="1" fill="#d7d7d7"/><g transform="translate(549.15 304.75)"><rect width="43.900" height="43.900" fill="#05e55c"/><circle cx="19.900" cy="13.200" r="2.500" fill="#fff"/>
<path d="M17.600 6.900 L30.800 15.200" stroke="#fff" stroke-width="1" stroke-linecap="round" fill="none"/>
<path d="M17.900 6.800 L17 8.400" stroke="#fff" stroke-width="1.600" stroke-linecap="round"/>
<path d="M22 17 L30.600 15.400" stroke="#fff" stroke-width="1.900" stroke-linecap="round" fill="none"/>
<path d="M20.200 16.600 L24.200 16.200 L26.800 25.600 L22.400 26.800z" fill="#fff" stroke="#fff" stroke-width="0.800" stroke-linejoin="round"/>
<path d="M23.800 26 L16.400 34.800" stroke="#fff" stroke-width="2.500" stroke-linecap="round" fill="none"/>
<path d="M25.400 25.800 L24.700 34.900" stroke="#fff" stroke-width="2.400" stroke-linecap="round" fill="none"/></g><rect x="541.20" y="378.15" width="58.300" height="22.750" fill="#17ce82"/><g transform="translate(548.90 385.60) scale(0.690)"><path fill="#fff" fill-rule="evenodd" d="M4.900 0 h2.200 l0.300 1.500 l0.800 0.350 l1.300-0.900 l1.550 1.550 l-0.900 1.300 l0.350 0.800 l1.500 0.300 v2.200 l-1.500 0.300 l-0.350 0.800 l0.900 1.300 l-1.550 1.550 l-1.300-0.900 l-0.800 0.350 l-0.300 1.500 h-2.200 l-0.300-1.500 l-0.800-0.350 l-1.300 0.900 l-1.550-1.550 l0.900-1.300 l-0.350-0.800 l-1.500-0.300 v-2.200 l1.500-0.300 l0.350-0.800 l-0.900-1.300 l1.550-1.550 l1.300 0.900 l0.800-0.350z M6 4 a2 2 0 1 0 0.001 0z"/></g><rect x="616.00" y="297.10" width="73.6" height="109.40" fill="#f5f5f6"/><rect x="616.00" y="406" width="73.6" height="1" fill="#d7d7d7"/><g transform="translate(630.50 304.75)"><rect width="43.900" height="43.900" fill="#5593ef"/><path d="M22 7.400 H29.600 V14.900 A7.600 7.600 0 1 1 22 7.400z" fill="#fff"/>
<path d="M8.900 34.600 V28 Q8.900 24.800 12 24.600 H17.400 L22 30.900 L26.600 24.600 H31.800 Q34.900 24.800 34.900 28 V34.600z" fill="#fff"/>
<path d="M20.600 24.800 H23.400 L22.900 26.600 L22 27.400 L21.100 26.600z" fill="#fff"/>
<path d="M21.500 27.400 H22.500 L23.100 29.400 L22 30.800 L20.900 29.400z" fill="#fff"/></g><rect x="623.00" y="378.15" width="58.300" height="22.750" fill="#16b4f6"/><g transform="translate(630.70 385.60) scale(0.690)"><path fill="#fff" fill-rule="evenodd" d="M4.900 0 h2.200 l0.300 1.500 l0.800 0.350 l1.300-0.900 l1.550 1.550 l-0.900 1.300 l0.350 0.800 l1.500 0.300 v2.200 l-1.500 0.300 l-0.350 0.800 l0.900 1.300 l-1.550 1.550 l-1.300-0.900 l-0.800 0.350 l-0.300 1.500 h-2.200 l-0.300-1.500 l-0.800-0.350 l-1.300 0.900 l-1.550-1.550 l0.900-1.300 l-0.350-0.800 l-1.500-0.300 v-2.200 l1.500-0.300 l0.350-0.800 l-0.900-1.300 l1.550-1.550 l1.300 0.900 l0.800-0.350z M6 4 a2 2 0 1 0 0.001 0z"/></g><rect x="697.20" y="297.10" width="73.6" height="109.40" fill="#f5f5f6"/><rect x="697.20" y="406" width="73.6" height="1" fill="#d7d7d7"/><g transform="translate(712.15 304.75)"><rect width="43.900" height="43.900" fill="#49c9a1"/><g fill="none" stroke="#fff" stroke-width="0.900" stroke-linecap="round"><path d="M17.800 10.200 Q21.900 7.400 26 10.200"/><path d="M19 11.700 Q21.900 9.900 24.800 11.700"/><path d="M20.300 13.100 Q21.900 12.300 23.500 13.100"/></g>
<rect x="7.500" y="15.700" width="29" height="16.600" rx="2.300" fill="#fff"/>
<path d="M19.200 32 H24.600 L21.900 36z" fill="#49c9a1" stroke="#fff" stroke-width="1.100" stroke-linejoin="round"/>
<rect x="10.900" y="17" width="22.700" height="13.900" fill="#49c9a1"/>
<rect x="19.900" y="30.600" width="4" height="2" fill="#49c9a1"/>
<g fill="#fff"><circle cx="17" cy="23.600" r="1.800"/><circle cx="22.500" cy="22.300" r="2.200"/><circle cx="27.600" cy="24" r="1.600"/>
<path d="M14.600 27.700 V26.400 Q14.600 25.200 16 25.200 H28.600 Q30 25.200 30 26.400 V27.700z"/></g>
<circle cx="9.300" cy="24" r="0.700" fill="#49c9a1"/>
<rect x="34.600" y="22" width="0.800" height="4" fill="#a4e4d0"/></g><rect x="705.00" y="378.15" width="58.300" height="22.750" fill="#17ce82"/><g transform="translate(712.70 385.60) scale(0.690)"><path fill="#fff" fill-rule="evenodd" d="M4.900 0 h2.200 l0.300 1.500 l0.800 0.350 l1.300-0.900 l1.550 1.550 l-0.900 1.300 l0.350 0.800 l1.500 0.300 v2.200 l-1.500 0.300 l-0.350 0.800 l0.900 1.300 l-1.550 1.550 l-1.300-0.900 l-0.800 0.350 l-0.300 1.500 h-2.200 l-0.300-1.500 l-0.800-0.350 l-1.300 0.900 l-1.550-1.550 l0.900-1.300 l-0.350-0.800 l-1.500-0.300 v-2.200 l1.500-0.300 l0.350-0.800 l-0.900-1.300 l1.550-1.550 l1.300 0.900 l0.800-0.350z M6 4 a2 2 0 1 0 0.001 0z"/></g><rect x="779.00" y="297.10" width="73.6" height="109.40" fill="#f5f5f6"/><rect x="779.00" y="406" width="73.6" height="1" fill="#d7d7d7"/><g transform="translate(793.40 304.75)"><rect width="43.900" height="43.900" fill="#7b6ae6"/><path d="M9.500 10.200 H27.800 Q29.300 10.200 29.300 11.700 V34.200 H9.500z" fill="#fff"/>
<g fill="#7b6ae6"><rect x="13.300" y="15.300" width="11.400" height="1.800"/><rect x="13.300" y="19.900" width="6.600" height="1.700"/><rect x="13.300" y="24.600" width="3.600" height="1.600"/></g>
<circle cx="28.700" cy="26" r="9.200" fill="#7b6ae6"/>
<circle cx="28.700" cy="26" r="7.900" fill="#fff"/>
<text x="28.900" y="31.200" text-anchor="middle" font-family="Liberation Sans,sans-serif" font-size="14.400" fill="#7b6ae6">¥</text></g><rect x="787.00" y="378.15" width="58.300" height="22.750" fill="#17ce82"/><g transform="translate(794.70 385.60) scale(0.690)"><path fill="#fff" fill-rule="evenodd" d="M4.900 0 h2.200 l0.300 1.500 l0.800 0.350 l1.300-0.900 l1.550 1.550 l-0.900 1.300 l0.350 0.800 l1.500 0.300 v2.200 l-1.500 0.300 l-0.350 0.800 l0.900 1.300 l-1.550 1.550 l-1.300-0.900 l-0.800 0.350 l-0.300 1.500 h-2.200 l-0.300-1.500 l-0.800-0.350 l-1.300 0.900 l-1.550-1.550 l0.900-1.300 l-0.350-0.800 l-1.500-0.300 v-2.200 l1.500-0.300 l0.350-0.800 l-0.900-1.300 l1.550-1.550 l1.300 0.900 l0.800-0.350z M6 4 a2 2 0 1 0 0.001 0z"/></g><rect x="207.20" y="418.15" width="73.6" height="109.35" fill="#f5f5f6"/><rect x="207.20" y="527" width="73.6" height="1" fill="#d7d7d7"/><g transform="translate(222.20 425.80)"><rect width="43.900" height="43.900" fill="#0cc0c4"/><circle cx="21.200" cy="15.300" r="8.100" fill="none" stroke="#fff" stroke-width="1.600"/>
<path d="M9.300 33.400 Q10.400 24.300 20.400 23.800 Q24.400 23.700 26.600 24.700" fill="none" stroke="#fff" stroke-width="1.700" stroke-linecap="round"/>
<path d="M25.400 27.600 A5.200 5.200 0 1 1 25.400 32.600" fill="none" stroke="#fff" stroke-width="1.500" stroke-linecap="round"/>
<path d="M24.600 29.200 H28.800 V27.300 L32.400 30.100 L28.800 32.900 V31 H24.600z" fill="#a5f0dc"/></g><rect x="214.40" y="499.20" width="58.300" height="22.750" fill="#17ce82"/><g transform="translate(222.10 506.65) scale(0.690)"><path fill="#fff" fill-rule="evenodd" d="M4.900 0 h2.200 l0.300 1.500 l0.800 0.350 l1.300-0.900 l1.550 1.550 l-0.900 1.300 l0.350 0.800 l1.500 0.300 v2.200 l-1.500 0.300 l-0.350 0.800 l0.900 1.300 l-1.550 1.550 l-1.300-0.900 l-0.800 0.350 l-0.300 1.500 h-2.200 l-0.300-1.500 l-0.800-0.350 l-1.300 0.900 l-1.550-1.550 l0.900-1.300 l-0.350-0.800 l-1.500-0.300 v-2.200 l1.500-0.300 l0.350-0.800 l-0.900-1.300 l1.550-1.550 l1.300 0.900 l0.800-0.350z M6 4 a2 2 0 1 0 0.001 0z"/></g></svg>
<div class="lb" style="left:197.20px;top:236.20px">新闻公告</div>
<div class="bx" style="left:234.80px;top:258.60px">已绑定</div>
<div class="lb" style="left:279.00px;top:236.20px">会议管理</div>
<div class="bx" style="left:316.40px;top:258.60px">已绑定</div>
<div class="lb" style="left:360.40px;top:236.20px">用车管理</div>
<div class="bx" style="left:398.40px;top:258.60px">已绑定</div>
<div class="lb" style="left:442.00px;top:236.20px">出差休假</div>
<div class="bx" style="left:480.40px;top:258.60px">已绑定</div>
<div class="lb" style="left:524.00px;top:236.20px">工作流程</div>
<div class="bx" style="left:561.60px;top:258.60px">已绑定</div>
<div class="lb" style="left:606.00px;top:236.20px">任务管理</div>
<div class="bx" style="left:643.40px;top:258.60px">已绑定</div>
<div class="lb" style="left:687.20px;top:236.20px">文档中心</div>
<div class="bx" style="left:725.40px;top:258.60px">未绑定</div>
<div class="lb" style="left:769.00px;top:236.20px">通讯录</div>
<div class="bx" style="left:807.40px;top:258.60px">已绑定</div>
<div class="lb" style="left:197.20px;top:357.30px">综合办公</div>
<div class="bx" style="left:234.80px;top:379.70px">未绑定</div>
<div class="lb" style="left:279.00px;top:357.30px">日程提醒</div>
<div class="bx" style="left:316.40px;top:379.70px">未绑定</div>
<div class="lb" style="left:360.40px;top:357.30px">工作报告</div>
<div class="bx" style="left:398.40px;top:379.70px">已绑定</div>
<div class="lb" style="left:442.00px;top:357.30px">项目管理</div>
<div class="bx" style="left:480.40px;top:379.70px">已绑定</div>
<div class="lb" style="left:524.00px;top:357.30px">企业活动</div>
<div class="bx" style="left:561.60px;top:379.70px">已绑定</div>
<div class="lb" style="left:606.00px;top:357.30px">企捷CRM</div>
<div class="bx" style="left:643.40px;top:379.70px">未绑定</div>
<div class="lb" style="left:687.20px;top:357.30px">同事社区</div>
<div class="bx" style="left:725.40px;top:379.70px">已绑定</div>
<div class="lb" style="left:769.00px;top:357.30px">经费报销</div>
<div class="bx" style="left:807.40px;top:379.70px">已绑定</div>
<div class="lb" style="left:197.20px;top:478.35px">人力资源</div>
<div class="bx" style="left:234.80px;top:500.75px">已绑定</div>
<div id="chat"><svg width="44" height="44" viewBox="0 0 44 44">
<path d="M26 14.400 Q36.400 14.400 36.400 22 Q36.400 26 33.200 28.200 L34.600 31.800 L29.600 29.400 Q27.800 29.800 26 29.800 Q15.600 29.800 15.600 22 Q15.600 14.400 26 14.400z" fill="#2196f3"/>
<path d="M18.400 11.600 Q29.400 11.600 29.400 19.400 Q29.400 27.400 18.400 27.400 Q16.400 27.400 14.600 27 L10.400 29.600 L11.600 25.800 Q7.400 23.600 7.400 19.400 Q7.400 11.600 18.400 11.600z" fill="#2196f3" stroke="#fff" stroke-width="0.900"/>
<circle cx="13.900" cy="19.700" r="1.050" fill="#fff"/><circle cx="18.100" cy="19.700" r="1.050" fill="#fff"/><circle cx="22.300" cy="19.700" r="1.050" fill="#fff"/>
</svg></div>
<div id="st"><i style="left:6.500px;width:1.200px"></i><i style="left:9px;width:2.500px;top:3.500px"></i><i style="left:23.500px;width:1px;top:0;background:#c6d6ec"></i><span style="left:28px;top:1.700px">完成</span><i style="left:789px;width:3px;top:4px"></i><i style="left:792.500px;width:4px"></i><i style="left:812.300px;width:5.500px;height:1.200px;background:#444"></i><i style="left:812.300px;width:1.200px;background:#444"></i><i style="left:816.600px;width:1.200px;background:#444"></i><i style="left:834.200px;width:9px;height:9px;border-radius:4px;background:transparent;border:1.200px solid #444"></i><span style="left:847px">0</span><i style="left:864.500px;width:8px;height:8px;border-radius:4px;background:transparent;border:1.200px solid #555"></i><span style="left:876.500px">100%</span></div>
</body>
</html>
